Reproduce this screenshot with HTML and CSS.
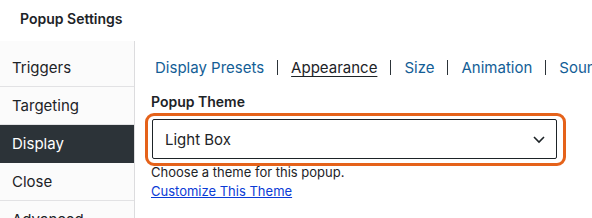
FILE: index.html
```html
<!DOCTYPE html>
<html>
<head>
<meta charset="utf-8">
<link rel="stylesheet" href="styles.css">
</head>
<body>
<div class="page">
  <h1 class="title">Popup Settings</h1>
  <div class="panel">
    <ul class="side">
      <li class="item">Triggers</li>
      <li class="item">Targeting</li>
      <li class="item active">Display</li>
      <li class="item">Close</li>
      <li class="item">Advanced</li>
    </ul>
    <div class="main">
      <div class="tabs"><a class="tab">Display Presets</a><span class="sep"></span><a class="tab current">Appearance</a><span class="sep"></span><a class="tab">Size</a><span class="sep"></span><a class="tab">Animation</a><span class="sep"></span><a class="tab">Sounds</a></div>
      <label class="label">Popup Theme</label>
      <div class="focus-ring">
        <div class="select">
          <span>Light Box</span>
          <svg class="chev" width="14" height="9" viewBox="0 0 14 9"><path d="M2 2 L7 7 L12 2" fill="none" stroke="#1d2327" stroke-width="1.6"/></svg>
        </div>
      </div>
      <p class="desc">Choose a theme for this popup.</p>
      <a class="link">Customize This Theme</a>
    </div>
  </div>
</div>
</body>
</html>
```
FILE: styles.css
```css
html, body { margin: 0; padding: 0; background: #fff; }
body { font-family: Inter, "Noto Sans", sans-serif; color: #1d2327; width: 592px; height: 218px; overflow: hidden; }
.page { padding-top: 9px; }
.title { margin: 0 0 0 20px; font-size: 14px; font-weight: 600; line-height: 20px; height: 32px; }
.panel { display: flex; }
.side { list-style: none; margin: 0; padding: 8px 0 0 0; width: 134px; border-right: 1px solid #dcdcde; background: #fbfbfb; flex: none; height: 200px; overflow: hidden; }
.item { height: 37px; line-height: 37px; padding-left: 12px; font-size: 15px; border-bottom: 1px solid #e2e2e4; color: #1d2327; }
.item.active { background: #2c3338; color: #fff; border-bottom-color: #2c3338; }
.main { flex: 1; min-width: 0; padding-left: 16px; }
.tabs { padding: 16px 0 0 4px; height: 36px; font-size: 15px; line-height: 22px; white-space: nowrap; overflow: hidden; }
.tab { color: #135e96; }
.tab.current { color: #1d2327; text-decoration: underline; text-underline-offset: 3px; }
.sep { display: inline-block; width: 1px; height: 15px; background: #2c3338; margin: 0 13px; vertical-align: -2px; }
.label { display: block; font-size: 14px; font-weight: 600; line-height: 18px; margin-bottom: 2px; }
.focus-ring { width: 405px; border: 3px solid #e5621a; border-radius: 9px; padding: 3px 6px 4px 4px; margin: 0 0 -6px -6px; }
.select { height: 40px; border: 1px solid #1d2327; border-radius: 2px; display: flex; align-items: center; justify-content: space-between; padding: 0 10px 0 12px; font-size: 15px; background: #fff; box-sizing: border-box; }
.chev { display: block; }
.desc { margin: 3px 0 0 0; font-size: 13px; line-height: 19px; }
.link { display: block; font-size: 13px; line-height: 19px; color: #0a3bd6; text-decoration: underline; }
```
